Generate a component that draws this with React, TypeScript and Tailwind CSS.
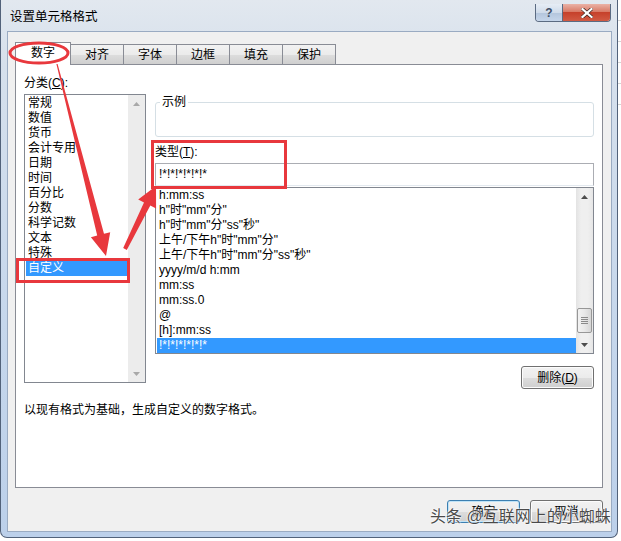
import React from "react";

const CATEGORIES = [
  "常规",
  "数值",
  "货币",
  "会计专用",
  "日期",
  "时间",
  "百分比",
  "分数",
  "科学记数",
  "文本",
  "特殊",
  "自定义",
];

const FORMATS = [
  "h:mm:ss",
  'h"时"mm"分"',
  'h"时"mm"分"ss"秒"',
  '上午/下午h"时"mm"分"',
  '上午/下午h"时"mm"分"ss"秒"',
  "yyyy/m/d h:mm",
  "mm:ss",
  "mm:ss.0",
  "@",
  "[h]:mm:ss",
  "!*!*!*!*!*!*",
];

const TABS = ["数字", "对齐", "字体", "边框", "填充", "保护"];

const RED = "#e8383d";

// tapered arrow: thin tail, wider shaft near the head
function arrowPoints(
  x1: number,
  y1: number,
  x2: number,
  y2: number,
  w0: number,
  w1: number,
  headLen: number,
  headW: number
): string {
  const dx = x2 - x1;
  const dy = y2 - y1;
  const len = Math.hypot(dx, dy);
  const ux = dx / len;
  const uy = dy / len;
  const nx = -uy;
  const ny = ux;
  const bx = x2 - ux * headLen;
  const by = y2 - uy * headLen;
  const pts = [
    [x1 + (nx * w0) / 2, y1 + (ny * w0) / 2],
    [bx + (nx * w1) / 2, by + (ny * w1) / 2],
    [bx + (nx * headW) / 2, by + (ny * headW) / 2],
    [x2, y2],
    [bx - (nx * headW) / 2, by - (ny * headW) / 2],
    [bx - (nx * w1) / 2, by - (ny * w1) / 2],
    [x1 - (nx * w0) / 2, y1 - (ny * w0) / 2],
  ];
  return pts.map((p) => `${p[0].toFixed(1)},${p[1].toFixed(1)}`).join(" ");
}

const Caret = ({ up, color }: { up: boolean; color: string }) => (
  <svg width="7" height="4" viewBox="0 0 7 4">
    <path d={up ? "M0 4 L3.5 0 L7 4 Z" : "M0 0 L3.5 4 L7 0 Z"} fill={color} />
  </svg>
);

const Button = ({
  children,
  primary,
}: {
  children: React.ReactNode;
  primary?: boolean;
}) => (
  <div
    className={
      "w-[73px] h-[23px] rounded-[3px] border flex items-center justify-center text-[12px] text-black bg-[linear-gradient(#f2f2f2_0%,#ebebeb_50%,#dddddd_51%,#cfcfcf_100%)] " +
      (primary
        ? "border-[#3c7fb1] shadow-[inset_0_0_0_1px_#bfe3f7]"
        : "border-[#707070] shadow-[inset_0_0_0_1px_#fcfcfc]")
    }
  >
    {children}
  </div>
);

const CategoryList = () => (
  <div className="h-[289px] border border-[#828790] bg-white flex">
    <div className="flex-1 pt-px pl-px">
      {CATEGORIES.map((c) => (
        <div
          key={c}
          className={
            "h-[15px] leading-[15px] pl-[2px] " +
            (c === "自定义" ? "bg-[#3399ff] text-white" : "")
          }
        >
          {c}
        </div>
      ))}
    </div>
    <div className="w-[17px] flex flex-col bg-[#ececec]">
      <div className="h-[17px] flex items-center justify-center">
        <Caret up color="#a8a8a8" />
      </div>
      <div className="flex-1" />
      <div className="h-[17px] flex items-center justify-center">
        <Caret up={false} color="#a8a8a8" />
      </div>
    </div>
  </div>
);

const FormatList = () => (
  <div className="h-[167px] mt-px border border-[#828790] bg-white flex">
    <div className="flex-1 pl-px">
      {FORMATS.map((f, i) => (
        <div
          key={f}
          className={
            "h-[15px] leading-[15px] pl-[2px] whitespace-nowrap " +
            (i === FORMATS.length - 1 ? "bg-[#3399ff] text-white" : "")
          }
        >
          {f}
        </div>
      ))}
    </div>
    <div className="w-[17px] flex flex-col bg-[linear-gradient(90deg,#e3e3e3,#efefef_30%,#efefef_70%,#e6e6e6)]">
      <div className="h-[17px] flex items-center justify-center">
        <Caret up color="#4d4d4d" />
      </div>
      <div className="flex-1 flex flex-col px-px">
        <div className="mt-[103px] h-[25px] rounded-[2px] border border-[#979797] bg-[linear-gradient(90deg,#f3f3f3,#e8e8e8_50%,#d6d6d6)] flex flex-col items-center justify-center gap-px">
          <div className="w-[7px] h-px bg-[#8a8a8a]" />
          <div className="w-[7px] h-px bg-[#8a8a8a]" />
          <div className="w-[7px] h-px bg-[#8a8a8a]" />
          <div className="w-[7px] h-px bg-[#8a8a8a]" />
        </div>
      </div>
      <div className="h-[17px] flex items-center justify-center">
        <Caret up={false} color="#4d4d4d" />
      </div>
    </div>
  </div>
);

const App: React.FC = () => {
  return (
    <div className="relative w-[621px] h-[541px] overflow-hidden bg-white flex font-['Liberation_Sans','Noto_Sans_CJK_SC',sans-serif] text-[12px] text-black">
      {/* dialog window */}
      <div className="w-[618px] h-[538px] shrink-0 flex flex-col border-x border-b border-[#52627a] rounded-b-[7px] pl-[6px] pr-[5px] pb-[5px] bg-[linear-gradient(180deg,#e2e8ef_0%,#d6e0ec_12%,#c6d7ec_60%,#bcd0ea_100%)]">
        {/* title bar */}
        <div className="h-[31px] shrink-0 flex items-start justify-between">
          <div className="pl-[3px] pt-[10px] leading-[15px] text-[12.5px]">
            设置单元格格式
          </div>
          <div className="mt-[4px] mr-px flex h-[18px] rounded-b-[4px] border border-t-0 border-[#5b6b82] overflow-hidden">
            <div className="w-[27px] flex items-center justify-center border-r border-[#5b6b82] bg-[linear-gradient(#e6edf5,#cfdbea_50%,#b3c5dc_51%,#c5d5ea)] text-[#3f4f66] text-[12px] font-bold">
              ?
            </div>
            <div className="w-[47px] flex items-center justify-center bg-[linear-gradient(#eab2a6,#d97b67_45%,#c6412b_50%,#d15a43_100%)]">
              <svg width="12" height="10" viewBox="0 0 12 10">
                <path
                  d="M1.5 1 L10.5 9 M10.5 1 L1.5 9"
                  stroke="#3a2420"
                  strokeWidth="3.6"
                  strokeLinecap="square"
                />
                <path
                  d="M1.5 1 L10.5 9 M10.5 1 L1.5 9"
                  stroke="#ffffff"
                  strokeWidth="2.2"
                  strokeLinecap="square"
                />
              </svg>
            </div>
          </div>
        </div>

        {/* client area */}
        <div className="flex-1 flex flex-col border border-[#9aabc2] bg-[#f0f0f0] pt-[10px] pl-[7px] pr-[8px] pb-[8px]">
          {/* tabs */}
          <div className="h-[22px] flex items-end">
            {TABS.map((t, i) =>
              i === 0 ? (
                <div
                  key={t}
                  className="relative z-10 -mb-px w-[56px] h-[23px] border border-b-0 border-[#898c95] bg-white flex items-center justify-center pb-[2px]"
                >
                  {t}
                </div>
              ) : (
                <div
                  key={t}
                  className="-ml-px w-[54px] h-[20px] border border-b-0 border-[#898c95] bg-[linear-gradient(#f2f2f2_0%,#ebebeb_50%,#dddddd_51%,#cfcfcf_100%)] flex items-center justify-center"
                >
                  {t}
                </div>
              )
            )}
          </div>

          {/* panel */}
          <div className="w-[588px] h-[424px] border border-[#898c95] bg-white px-[8px] pt-[11px]">
            <div className="flex gap-[9px]">
              <div className="w-[122px] flex flex-col">
                <div className="leading-[15px]">
                  分类(<span className="underline">C</span>):
                </div>
                <div className="mt-[3px]">
                  <CategoryList />
                </div>
              </div>

              <div className="w-[439px] flex flex-col pt-[19px]">
                <fieldset className="h-[42px] border border-[#d5dfe5] rounded-[3px]">
                  <legend className="ml-[4px] px-[2px] leading-[14px]">
                    示例
                  </legend>
                </fieldset>
                <div className="mt-[8px] leading-[15px]">
                  类型(<span className="underline">T</span>):
                </div>
                <div className="mt-[3px] h-[23px] border border-[#abadb3] border-b-[#e3e9ef] bg-white pl-[3px] leading-[21px]">
                  !*!*!*!*!*!*
                </div>
                <FormatList />
                <div className="mt-[12px] self-end">
                  <Button>
                    删除(<span className="underline">D</span>)
                  </Button>
                </div>
              </div>
            </div>
            <div className="mt-[14px] leading-[15px]">
              以现有格式为基础，生成自定义的数字格式。
            </div>
          </div>

          {/* dialog buttons */}
          <div className="mt-[12px] flex justify-end gap-[10px]">
            <Button primary>确定</Button>
            <Button>取消</Button>
          </div>
        </div>
      </div>

      {/* sheet behind the dialog */}
      <div className="flex-1 flex flex-col">
        <div className="h-[21px] border-b border-[#d4d4d4]" />
        <div className="h-[21px] border-b border-[#d4d4d4]" />
        <div className="h-[21px] border-b border-[#d4d4d4]" />
        <div className="h-[21px] border-b border-[#d4d4d4]" />
        <div className="h-[21px] border-b border-[#d4d4d4]" />
      </div>

      {/* red annotations */}
      <svg
        className="absolute left-0 top-0 z-20 pointer-events-none"
        width="621"
        height="541"
        viewBox="0 0 621 541"
      >
        <ellipse
          cx="39"
          cy="53"
          rx="29"
          ry="10"
          fill="none"
          stroke={RED}
          strokeWidth="3"
        />
        <rect
          x="17.5"
          y="259.5"
          width="111"
          height="22"
          fill="none"
          stroke={RED}
          strokeWidth="3"
        />
        <rect
          x="152.5"
          y="141.5"
          width="133"
          height="46"
          fill="none"
          stroke={RED}
          strokeWidth="3"
        />
        <polygon
          points={arrowPoints(57, 64, 106, 256, 1.2, 7, 22, 20)}
          fill={RED}
        />
        <polygon
          points={arrowPoints(125, 249, 156, 186, 4, 7, 20, 20)}
          fill={RED}
        />
      </svg>

      {/* watermark */}
      <div className="absolute z-30 left-[430px] top-[507px] text-[16px] leading-[20px] text-[#4a4a4a] whitespace-nowrap [text-shadow:0_0_2px_#ffffff,0_0_2px_#ffffff,0_0_1px_#ffffff]">
        头条 @互联网上的小蜘蛛
      </div>
    </div>
  );
};

export default App;
